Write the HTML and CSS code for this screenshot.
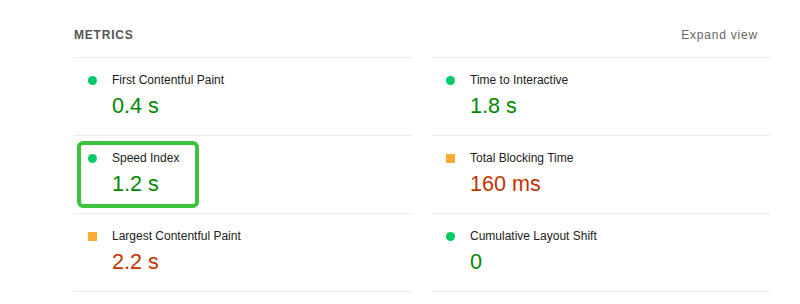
FILE: index.html
```html
<!DOCTYPE html>
<html lang="en">
  <head>
    <meta charset="UTF-8" />
    <meta name="viewport" content="width=device-width, initial-scale=1.0" />
    <title>Metrics</title>
    <link rel="stylesheet" href="styles.css">
  </head>
  <body>
    <div class="metrics">
      <div class="metrics-header">
        <span class="metrics-title">Metrics</span>
        <span class="metrics-toggle">Expand view</span>
      </div>
      <div class="metrics-grid">
        <div class="metric pass">
          <div class="metric-title"><span class="icon"></span>First Contentful Paint</div>
          <div class="metric-value">0.4 s</div>
        </div>
        <div class="metric pass">
          <div class="metric-title"><span class="icon"></span>Time to Interactive</div>
          <div class="metric-value">1.8 s</div>
        </div>
        <div class="metric pass highlighted">
          <div class="metric-title"><span class="icon"></span>Speed Index</div>
          <div class="metric-value">1.2 s</div>
          <div class="highlight"></div>
        </div>
        <div class="metric average">
          <div class="metric-title"><span class="icon"></span>Total Blocking Time</div>
          <div class="metric-value">160 ms</div>
        </div>
        <div class="metric average">
          <div class="metric-title"><span class="icon"></span>Largest Contentful Paint</div>
          <div class="metric-value">2.2 s</div>
        </div>
        <div class="metric pass">
          <div class="metric-title"><span class="icon"></span>Cumulative Layout Shift</div>
          <div class="metric-value">0</div>
        </div>
      </div>
    </div>
  </body>
</html>
```
FILE: styles.css
```css
body {
  margin: 0;
  background: #fff;
  font-family: "Liberation Sans", Arial, sans-serif;
  color: #212121;
}
.metrics {
  width: 696px;
  padding: 26px 0 0 74px;
}
.metrics-header {
  display: flex;
  justify-content: space-between;
  font-size: 12px;
  line-height: 18px;
  letter-spacing: 0.8px;
  margin-bottom: 13px;
}
.metrics-title {
  text-transform: uppercase;
  font-weight: bold;
  color: #555;
}
.metrics-toggle {
  color: #666;
  padding-right: 12px;
}
.metrics-grid {
  display: grid;
  grid-template-columns: 1fr 1fr;
  column-gap: 20px;
}
.metric {
  position: relative;
  border-top: 1px solid #ebebeb;
  padding: 13px 0 16px 38px;
}
.metric:nth-last-child(-n + 2) {
  border-bottom: 1px solid #ebebeb;
}
.metric-title {
  position: relative;
  font-size: 12px;
  line-height: 18px;
}
.icon {
  position: absolute;
  left: -24px;
  top: 5px;
  width: 9px;
  height: 9px;
}
.pass .icon {
  background: #0c6;
  border-radius: 50%;
}
.average .icon {
  background: #fa3;
}
.metric-value {
  font-size: 21.6px;
  line-height: 26px;
  margin-top: 4px;
}
.pass .metric-value {
  color: #080;
}
.average .metric-value {
  color: #c33300;
}
.highlight {
  position: absolute;
  left: 3px;
  top: 5px;
  width: 114px;
  height: 59px;
  border: 4px solid #3dc23d;
  border-radius: 6px;
}
```
